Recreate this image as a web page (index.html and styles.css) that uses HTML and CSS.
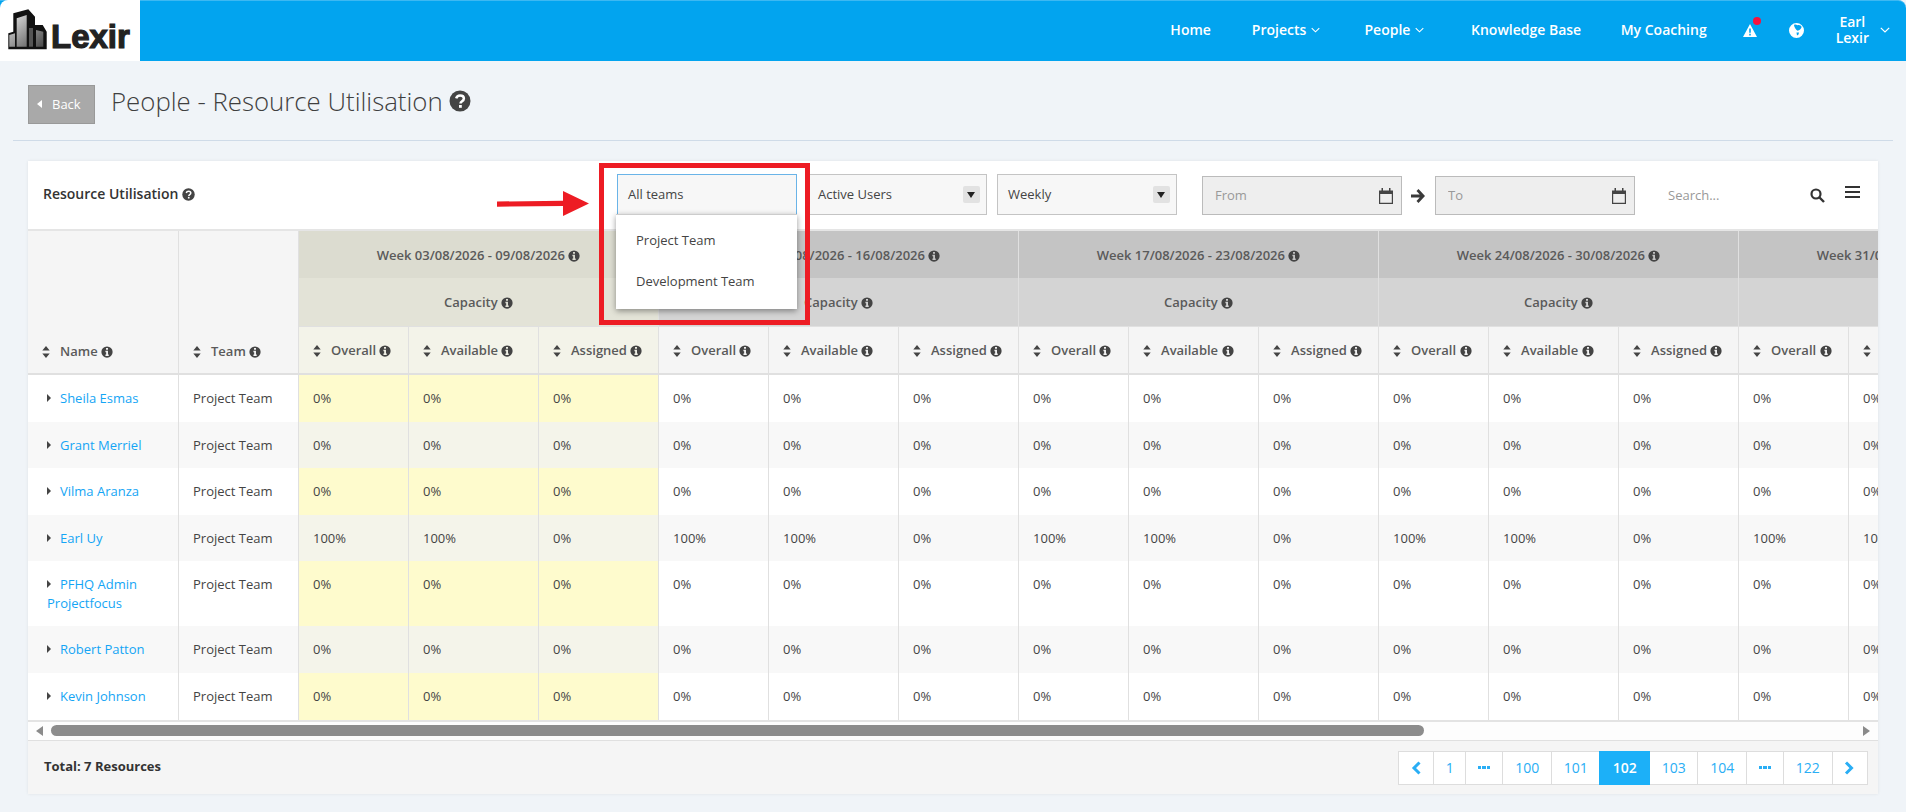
FILE: index.html
```html
<!DOCTYPE html>
<html lang="en">
<head>
<meta charset="utf-8">
<title>People - Resource Utilisation</title>
<link rel="stylesheet" href="styles.css">
</head>
<body>
<svg class="defs" width="0" height="0" aria-hidden="true">
  <symbol id="i-info" viewBox="0 0 16 16"><path fill="currentColor" fill-rule="evenodd" d="M8 .5a7.5 7.5 0 1 0 0 15 7.5 7.5 0 0 0 0-15zM6.700 2.800h2.600v2.300H6.700zM5.900 6.400h3.400v5h1v1.800H5.900v-1.800h1V8.200h-1z"/></symbol>
  <symbol id="i-sort" viewBox="0 0 8 13"><path fill="currentColor" d="M4 0l4 5H0zM4 13L0 8h8z"/></symbol>
  <symbol id="i-help" viewBox="0 0 22 22"><circle cx="11" cy="11" r="10.500" fill="currentColor"/><path d="M7.200 8.400c.5-2 2-3 3.900-3 2.200 0 3.800 1.300 3.800 3.100 0 2.800-3.400 2.700-3.400 5" fill="none" stroke="#fff" stroke-width="2.500"/><rect x="10" y="15" width="2.800" height="2.800" fill="#fff"/></symbol>
  <symbol id="i-cal" viewBox="0 0 14 16"><path fill="currentColor" fill-rule="evenodd" d="M0 2.500h2.500V0H4v2.500h6V0h1.500v2.500H14V16H0zM1.200 6v8.800h11.600V6z"/></symbol>
  <symbol id="i-chev" viewBox="0 0 10 6"><path fill="none" stroke="currentColor" stroke-width="1.200" d="M.8.8L5 5l4.200-4.200"/></symbol>
</svg>

<header class="topbar">
  <a class="logo" href="#">
    <svg class="logo-mark" viewBox="0 0 43 42" width="43" height="42" aria-hidden="true">
      <defs><linearGradient id="lg" x1="0" y1="0" x2="1" y2="1"><stop offset="0" stop-color="#e6e6e6"/><stop offset="1" stop-color="#4a4a4a"/></linearGradient></defs>
      <path fill="#111" d="M5.300 5.300L20.300 1.300 27 8.700V17h7.700l4 6.700v17.600H.3v-16l5-1.600z"/>
      <path fill="url(#lg)" d="M1.300 27L7 25.300v13.400H1.300zM8.700 10.300L18.700 7v31.700h-10zM28 22l7.300 1.700v15H28z"/>
      <path fill="#555" d="M21 20h4v18.700h-4z"/>
    </svg>
    <span class="logo-text">Lexir</span>
  </a>
  <nav class="nav">
    <a href="#">Home</a>
    <a href="#" class="has-menu item-projects">Projects <svg class="chev" width="9" height="6"><use href="#i-chev"/></svg></a>
    <a href="#" class="has-menu item-people">People <svg class="chev" width="9" height="6"><use href="#i-chev"/></svg></a>
    <a href="#">Knowledge Base</a>
    <a href="#" class="item-coaching">My Coaching</a>
    <span class="alert">
      <svg width="14" height="13" viewBox="0 0 14 13" aria-hidden="true"><path fill="#fff" fill-rule="evenodd" d="M7 0l7 13H0zM6.200 4.500v4.300h1.600V4.500zM6.200 9.800v1.600h1.600V9.800z"/></svg>
      <i class="dot"></i>
    </span>
    <svg class="globe" width="15" height="15" viewBox="0 0 15 15" aria-hidden="true"><path fill="#fff" fill-rule="evenodd" d="M7.500 0a7.500 7.500 0 1 0 0 15 7.500 7.500 0 0 0 0-15zM5 2c1.500-1 2.500 0 3.500.3 1.500-.8 3.500 0 4 1.500.3 1.500-2 3.800-4 4C7 6.800 5 3.800 5 2zM7.500 9.500H10l-.5 2L8 12.500z"/></svg>
    <a href="#" class="user"><span class="user-name">Earl<br>Lexir</span><svg class="chev-lg" width="10" height="6"><use href="#i-chev"/></svg></a>
  </nav>
</header>

<main class="page">
  <div class="page-head">
    <a href="#" class="back"><i class="back-tri"></i>Back</a>
    <h1 class="title">People - Resource Utilisation</h1>
    <svg class="help-lg" width="22" height="22"><use href="#i-help"/></svg>
  </div>
  <hr class="rule">

  <section class="panel">
    <div class="toolbar">
      <div class="panel-title">Resource Utilisation <svg class="help-sm" width="13" height="13"><use href="#i-help"/></svg></div>
      <div class="select open">All teams
        <ul class="menu">
          <li>Project Team</li>
          <li>Development Team</li>
        </ul>
      </div>
      <div class="select">Active Users<i class="chip"></i></div>
      <div class="select">Weekly<i class="chip"></i></div>
      <div class="date date-from"><input class="date-input" placeholder="From" disabled><svg class="cal" width="14" height="16"><use href="#i-cal"/></svg></div>
      <svg class="to-arrow" width="14" height="14" viewBox="0 0 14 14" aria-hidden="true"><path fill="#3a3a3a" d="M7.500 0L14 7l-6.500 7-2-2 3.200-3.400H0V5.400h8.700L5.500 2z"/></svg>
      <div class="date"><input class="date-input" placeholder="To" disabled><svg class="cal" width="14" height="16"><use href="#i-cal"/></svg></div>
      <input class="search" placeholder="Search...">
      <svg class="search-ic" width="15" height="15" viewBox="0 0 15 15" aria-hidden="true"><circle cx="6" cy="6" r="4.500" fill="none" stroke="#333" stroke-width="2.200"/><path d="M9.500 9.500L14 14" stroke="#333" stroke-width="2.400"/></svg>
      <div class="burger"><i></i><i></i><i></i></div>
    </div>

    <div class="table-wrap">
      <table class="grid">
        <colgroup>
          <col class="col-name"><col class="col-team">
          <col class="col-o"><col class="col-av"><col class="col-as">
          <col class="col-o"><col class="col-av"><col class="col-as">
          <col class="col-o"><col class="col-av"><col class="col-as">
          <col class="col-o"><col class="col-av"><col class="col-as">
          <col class="col-o"><col class="col-av"><col class="col-as">
        </colgroup>
        <thead>
          <tr class="r-week">
            <th rowspan="3" class="th-main"><svg class="sort" width="8" height="12"><use href="#i-sort"/></svg>Name <svg class="info" width="12" height="12"><use href="#i-info"/></svg></th>
            <th rowspan="3" class="th-main"><svg class="sort" width="8" height="12"><use href="#i-sort"/></svg>Team <svg class="info" width="12" height="12"><use href="#i-info"/></svg></th>
            <th colspan="3" class="now">Week 03/08/2026 - 09/08/2026 <svg class="info" width="12" height="12"><use href="#i-info"/></svg></th>
            <th colspan="3">Week 10/08/2026 - 16/08/2026 <svg class="info" width="12" height="12"><use href="#i-info"/></svg></th>
            <th colspan="3">Week 17/08/2026 - 23/08/2026 <svg class="info" width="12" height="12"><use href="#i-info"/></svg></th>
            <th colspan="3">Week 24/08/2026 - 30/08/2026 <svg class="info" width="12" height="12"><use href="#i-info"/></svg></th>
            <th colspan="3">Week 31/08/2026 - 06/09/2026 <svg class="info" width="12" height="12"><use href="#i-info"/></svg></th>
          </tr>
          <tr class="r-cap">
            <th colspan="3" class="now">Capacity <svg class="info" width="12" height="12"><use href="#i-info"/></svg></th>
            <th colspan="3">Capacity <svg class="info" width="12" height="12"><use href="#i-info"/></svg></th>
            <th colspan="3">Capacity <svg class="info" width="12" height="12"><use href="#i-info"/></svg></th>
            <th colspan="3">Capacity <svg class="info" width="12" height="12"><use href="#i-info"/></svg></th>
            <th colspan="3">Capacity <svg class="info" width="12" height="12"><use href="#i-info"/></svg></th>
          </tr>
          <tr class="r-sort">
            <th class="now"><svg class="sort" width="8" height="12"><use href="#i-sort"/></svg>Overall <svg class="info" width="12" height="12"><use href="#i-info"/></svg></th>
            <th class="now"><svg class="sort" width="8" height="12"><use href="#i-sort"/></svg>Available <svg class="info" width="12" height="12"><use href="#i-info"/></svg></th>
            <th class="now"><svg class="sort" width="8" height="12"><use href="#i-sort"/></svg>Assigned <svg class="info" width="12" height="12"><use href="#i-info"/></svg></th>
            <th><svg class="sort" width="8" height="12"><use href="#i-sort"/></svg>Overall <svg class="info" width="12" height="12"><use href="#i-info"/></svg></th>
            <th><svg class="sort" width="8" height="12"><use href="#i-sort"/></svg>Available <svg class="info" width="12" height="12"><use href="#i-info"/></svg></th>
            <th><svg class="sort" width="8" height="12"><use href="#i-sort"/></svg>Assigned <svg class="info" width="12" height="12"><use href="#i-info"/></svg></th>
            <th><svg class="sort" width="8" height="12"><use href="#i-sort"/></svg>Overall <svg class="info" width="12" height="12"><use href="#i-info"/></svg></th>
            <th><svg class="sort" width="8" height="12"><use href="#i-sort"/></svg>Available <svg class="info" width="12" height="12"><use href="#i-info"/></svg></th>
            <th><svg class="sort" width="8" height="12"><use href="#i-sort"/></svg>Assigned <svg class="info" width="12" height="12"><use href="#i-info"/></svg></th>
            <th><svg class="sort" width="8" height="12"><use href="#i-sort"/></svg>Overall <svg class="info" width="12" height="12"><use href="#i-info"/></svg></th>
            <th><svg class="sort" width="8" height="12"><use href="#i-sort"/></svg>Available <svg class="info" width="12" height="12"><use href="#i-info"/></svg></th>
            <th><svg class="sort" width="8" height="12"><use href="#i-sort"/></svg>Assigned <svg class="info" width="12" height="12"><use href="#i-info"/></svg></th>
            <th><svg class="sort" width="8" height="12"><use href="#i-sort"/></svg>Overall <svg class="info" width="12" height="12"><use href="#i-info"/></svg></th>
            <th><svg class="sort" width="8" height="12"><use href="#i-sort"/></svg>Available <svg class="info" width="12" height="12"><use href="#i-info"/></svg></th>
            <th><svg class="sort" width="8" height="12"><use href="#i-sort"/></svg>Assigned <svg class="info" width="12" height="12"><use href="#i-info"/></svg></th>
          </tr>
        </thead>
        <tbody>
          <tr>
            <td class="name"><i class="caret"></i><a href="#">Sheila Esmas</a></td><td>Project Team</td>
            <td class="warn">0%</td><td class="warn">0%</td><td class="warn">0%</td>
            <td>0%</td><td>0%</td><td>0%</td><td>0%</td><td>0%</td><td>0%</td><td>0%</td><td>0%</td><td>0%</td><td>0%</td><td>0%</td><td>0%</td>
          </tr>
          <tr class="alt">
            <td class="name"><i class="caret"></i><a href="#">Grant Merriel</a></td><td>Project Team</td>
            <td class="warn">0%</td><td class="warn">0%</td><td class="warn">0%</td>
            <td>0%</td><td>0%</td><td>0%</td><td>0%</td><td>0%</td><td>0%</td><td>0%</td><td>0%</td><td>0%</td><td>0%</td><td>0%</td><td>0%</td>
          </tr>
          <tr>
            <td class="name"><i class="caret"></i><a href="#">Vilma Aranza</a></td><td>Project Team</td>
            <td class="warn">0%</td><td class="warn">0%</td><td class="warn">0%</td>
            <td>0%</td><td>0%</td><td>0%</td><td>0%</td><td>0%</td><td>0%</td><td>0%</td><td>0%</td><td>0%</td><td>0%</td><td>0%</td><td>0%</td>
          </tr>
          <tr class="alt">
            <td class="name"><i class="caret"></i><a href="#">Earl Uy</a></td><td>Project Team</td>
            <td class="warn">100%</td><td class="warn">100%</td><td class="warn">0%</td>
            <td>100%</td><td>100%</td><td>0%</td><td>100%</td><td>100%</td><td>0%</td><td>100%</td><td>100%</td><td>0%</td><td>100%</td><td>100%</td><td>0%</td>
          </tr>
          <tr>
            <td class="name"><i class="caret"></i><a href="#">PFHQ Admin Projectfocus</a></td><td>Project Team</td>
            <td class="warn">0%</td><td class="warn">0%</td><td class="warn">0%</td>
            <td>0%</td><td>0%</td><td>0%</td><td>0%</td><td>0%</td><td>0%</td><td>0%</td><td>0%</td><td>0%</td><td>0%</td><td>0%</td><td>0%</td>
          </tr>
          <tr class="alt">
            <td class="name"><i class="caret"></i><a href="#">Robert Patton</a></td><td>Project Team</td>
            <td class="warn">0%</td><td class="warn">0%</td><td class="warn">0%</td>
            <td>0%</td><td>0%</td><td>0%</td><td>0%</td><td>0%</td><td>0%</td><td>0%</td><td>0%</td><td>0%</td><td>0%</td><td>0%</td><td>0%</td>
          </tr>
          <tr>
            <td class="name"><i class="caret"></i><a href="#">Kevin Johnson</a></td><td>Project Team</td>
            <td class="warn">0%</td><td class="warn">0%</td><td class="warn">0%</td>
            <td>0%</td><td>0%</td><td>0%</td><td>0%</td><td>0%</td><td>0%</td><td>0%</td><td>0%</td><td>0%</td><td>0%</td><td>0%</td><td>0%</td>
          </tr>
        </tbody>
      </table>
    </div>

    <div class="hscroll">
      <i class="hs-left"></i>
      <div class="hs-track"><div class="hs-thumb"></div></div>
      <i class="hs-right"></i>
    </div>

    <footer class="panel-foot">
      <strong class="total">Total: 7 Resources</strong>
      <div class="pager">
        <a href="#" class="pg"><svg class="pg-ic" width="10" height="14" viewBox="0 0 10 14"><path fill="none" stroke="currentColor" stroke-width="3" d="M8.500 1.500L3 7l5.500 5.500"/></svg></a>
        <a href="#" class="pg">1</a>
        <a href="#" class="pg"><i class="dots"></i></a>
        <a href="#" class="pg">100</a>
        <a href="#" class="pg">101</a>
        <a href="#" class="pg active">102</a>
        <a href="#" class="pg">103</a>
        <a href="#" class="pg">104</a>
        <a href="#" class="pg"><i class="dots"></i></a>
        <a href="#" class="pg">122</a>
        <a href="#" class="pg"><svg class="pg-ic" width="11" height="14" viewBox="0 0 11 14"><path fill="none" stroke="currentColor" stroke-width="3" d="M2 1.500L7.500 7 2 12.500"/></svg></a>
      </div>
    </footer>
  </section>
</main>

<div class="callout-box"></div>
<svg class="callout-arrow" width="92" height="26" viewBox="0 0 92 26" aria-hidden="true"><path fill="#ed1c24" d="M0 10.500l66-.7V0l26 12.500L66 25v-10l-66 .7z"/></svg>
</body>
</html>
```

FILE: styles.css
```css
* { box-sizing: border-box; }
html, body { height: 100%; }
body {
  margin: 0;
  background: #f0f4f8;
  font: 13px/18px "Open Sans", "Liberation Sans", sans-serif;
  color: #444;
  overflow: hidden;
  position: relative;
}
a { text-decoration: none; color: inherit; }
i { font-style: normal; }
.defs { position: absolute; }

/* top bar */
.topbar {
  height: 61px;
  display: flex;
  justify-content: space-between;
  background: #02a4ef;
  border-top: 1px solid #3db8f2;
  border-top-right-radius: 8px;
}
.logo {
  width: 140px;
  margin-top: -1px;
  background: #fff;
  border-top-left-radius: 8px;
  display: flex;
  align-items: flex-start;
  padding: 8px 0 0 8px;
}
.logo-mark { flex: none; }
.logo-text {
  margin-top: 11px;
  font: 700 33px/36px "Liberation Sans", sans-serif;
  color: #222;
  -webkit-text-stroke: 1.2px #222;
}
.nav {
  display: flex;
  align-items: center;
  gap: 42px;
  color: #fff;
  font-size: 14px;
  font-weight: 600;
  padding: 0 16px 2px 0;
}
.has-menu { padding-right: 5px; }
.item-projects { margin-left: -1px; }
.item-people { margin-left: -2.500px; }
.item-coaching { margin-left: -2.500px; }
.chev { vertical-align: 2px; margin-left: 1px; }
.alert { position: relative; display: flex; margin-left: -6px; }
.dot {
  position: absolute;
  left: 10px;
  top: -7px;
  width: 8px;
  height: 8px;
  border-radius: 50%;
  background: #f5123f;
}
.globe { margin-left: -10px; }
.user { display: flex; align-items: center; gap: 11px; margin-left: -10px; }
.user-name { display: block; text-align: center; line-height: 16px; }

/* page head */
.page { padding: 24px 13px 0; }
.page-head { display: flex; align-items: center; height: 39px; margin-left: 15px; }
.back {
  width: 67px;
  height: 39px;
  background: #a9a9a9;
  border: 1px solid #999;
  color: #fff;
  display: flex;
  align-items: center;
  padding: 0 0 2px 8px;
}
.back-tri {
  width: 0;
  height: 0;
  border: 4px solid transparent;
  border-left-width: 0;
  border-right: 5px solid #fff;
  margin-right: 10px;
}
.title {
  margin: -8px 6px 0 16px;
  font-size: 25.800px;
  line-height: 32px;
  font-weight: 300;
  color: #3f3f3f;
}
.help-lg { color: #444; margin-top: -8px; }
.rule { border: 0; border-top: 1px solid #cfdbe8; margin: 16px 0 20px; }

/* panel */
.panel {
  margin: 0 15px;
  width: 1850px;
  background: #fff;
  box-shadow: 0 0 3px rgba(0, 0, 0, .08);
}
.toolbar {
  height: 70px;
  padding-top: 13px;
  display: flex;
  align-items: flex-start;
  border-bottom: 2px solid #e5e5e5;
}
.panel-title {
  width: 589px;
  padding: 11px 0 0 15px;
  font-size: 14px;
  font-weight: 600;
  color: #333;
}
.help-sm { color: #444; vertical-align: -2px; }
.select {
  position: relative;
  width: 180px;
  height: 41px;
  margin-right: 10px;
  padding: 0 10px 2px;
  display: flex;
  align-items: center;
  justify-content: space-between;
  background: #f7f7f7;
  border: 1px solid #c4c4c4;
  color: #444;
}
.select.open { border-color: #6ab4e8; }
.chip {
  width: 17px;
  height: 17px;
  margin: 2px -4px 0 0;
  border-radius: 2px;
  background: #e2e2e2;
  position: relative;
}
.chip::after {
  content: "";
  position: absolute;
  left: 4px;
  top: 6px;
  border: 4.500px solid transparent;
  border-top: 6px solid #222;
  border-bottom-width: 0;
}
.menu {
  position: absolute;
  z-index: 3;
  left: -2px;
  top: 39px;
  width: 181px;
  height: 95px;
  margin: 0;
  padding: 4.500px 0 0;
  list-style: none;
  background: #fff;
  border-top: 1px solid #ccc;
  box-shadow: 0 2px 6px rgba(0, 0, 0, .4);
}
.menu li { padding: 0 0 0 20px; line-height: 41.500px; color: #444; }
.date {
  width: 200px;
  height: 39px;
  margin-top: 2px;
  display: flex;
  align-items: center;
  padding: 0 8px 2px 12px;
  background: #eee;
  border: 1px solid #bbb;
}
.date-from { margin-left: 15px; }
.date-input {
  flex: 1;
  width: 100px;
  border: 0;
  background: none;
  padding: 0;
  font: inherit;
  outline: 0;
}
.date-input::placeholder { color: #999; opacity: 1; }
.cal { color: #444; flex: none; margin-top: 2px; }
.to-arrow { margin: 15px 10px 0 9px; flex: none; }
.search {
  width: 142px;
  height: 37px;
  margin: 2px 33px 2px 33px;
  border: 0;
  padding: 0;
  background: none;
  font: inherit;
  outline: 0;
}
.search::placeholder { color: #999; opacity: 1; }
.search-ic { margin: 14px 0 0 -33px; flex: none; }
.burger { margin: 12px 0 0 20px; width: 15px; flex: none; }
.burger i { display: block; height: 2px; background: #333; margin-bottom: 3px; }

/* table */
.table-wrap { overflow: hidden; }
.grid {
  width: 2071px;
  table-layout: fixed;
  border-collapse: separate;
  border-spacing: 0;
}
.col-name { width: 151px; }
.col-team { width: 120px; }
.col-o { width: 110px; }
.col-av { width: 130px; }
.col-as { width: 120px; }
th {
  font-weight: 600;
  color: #5a5a5a;
  border-right: 1px solid #e0e0e0;
  padding: 0;
}
.info { color: #444; vertical-align: -2px; }
.sort { color: #444; margin-right: 10px; vertical-align: -2px; }
.r-week th { height: 47px; background: #c4c4c4; text-align: center; }
.r-week th.now { background: #dcdcd0; }
.r-cap th { height: 48px; background: #d4d4d4; text-align: center; }
.r-cap th.now { background: #e3e3d7; }
.r-sort th {
  height: 49px;
  background: #f5f5f5;
  text-align: left;
  padding-left: 14px;
  border-top: 1px solid #e0e0e0;
  border-bottom: 2px solid #e0e0e0;
}
.r-sort th.now { background: #f3f3e9; }
.r-week th.th-main {
  background: #f5f5f5;
  vertical-align: bottom;
  text-align: left;
  padding: 0 0 13px 14px;
  border-bottom: 2px solid #e0e0e0;
}
td {
  padding: 14px;
  line-height: 1.42857;
  vertical-align: top;
  border-right: 1px solid #e0e0e0;
  background: #fff;
  color: #444;
}
tr.alt td { background: #f8f8f8; }
td.warn { background: #fefbcd; }
tr.alt td.warn { background: #f4f4ea; }
td.name { padding-left: 19px; }
td.name a { color: #14a5f5; }
.caret {
  display: inline-block;
  width: 0;
  height: 0;
  border: 4px solid transparent;
  border-right-width: 0;
  border-left: 4px solid #444;
  margin-right: 9px;
  vertical-align: 1px;
}
.hscroll {
  height: 21px;
  display: flex;
  align-items: center;
  padding: 0 8px;
  background: #fdfdfd;
  border-top: 2px solid #e3e3e3;
  border-bottom: 1px solid #e0e0e0;
}
.hs-left, .hs-right {
  width: 0;
  height: 0;
  border: 5px solid transparent;
  flex: none;
}
.hs-left { border-left-width: 0; border-right: 7px solid #8a8a8a; }
.hs-right { border-right-width: 0; border-left: 7px solid #8a8a8a; }
.hs-track { flex: 1; padding: 0 8px; }
.hs-thumb { width: 1373px; height: 11px; border-radius: 6px; background: #8c8c8c; }

/* footer */
.panel-foot {
  height: 53px;
  display: flex;
  justify-content: space-between;
  padding: 10px 10px 0 16px;
  background: #f5f5f5;
}
.total { margin-top: 6px; color: #333; font-weight: 700; }
.pager { display: flex; height: 34px; }
.pg {
  display: flex;
  align-items: center;
  height: 34px;
  padding: 0 11.750px;
  margin-left: -1px;
  background: #fff;
  border: 1px solid #ddd;
  color: #2aaef5;
  font-size: 14px;
}
.pg.active {
  padding: 0 12.250px;
  background: #1cb0f8;
  border-color: #1cb0f8;
  color: #fff;
  font-weight: 600;
  position: relative;
}
.pg-ic { display: block; }
.dots {
  width: 12px;
  height: 3px;
  margin: 0 .250px;
  background: #2aaef5;
  -webkit-mask: repeating-linear-gradient(90deg, #000 0 3px, transparent 3px 4.500px);
  mask: repeating-linear-gradient(90deg, #000 0 3px, transparent 3px 4.500px);
}

/* annotation drawn over the screenshot */
.callout-box {
  position: absolute;
  left: 599px;
  top: 163px;
  width: 211px;
  height: 162px;
  border: 5px solid #ed1c24;
  z-index: 5;
  pointer-events: none;
}
.callout-arrow {
  position: absolute;
  left: 497px;
  top: 191px;
  z-index: 5;
}
```
